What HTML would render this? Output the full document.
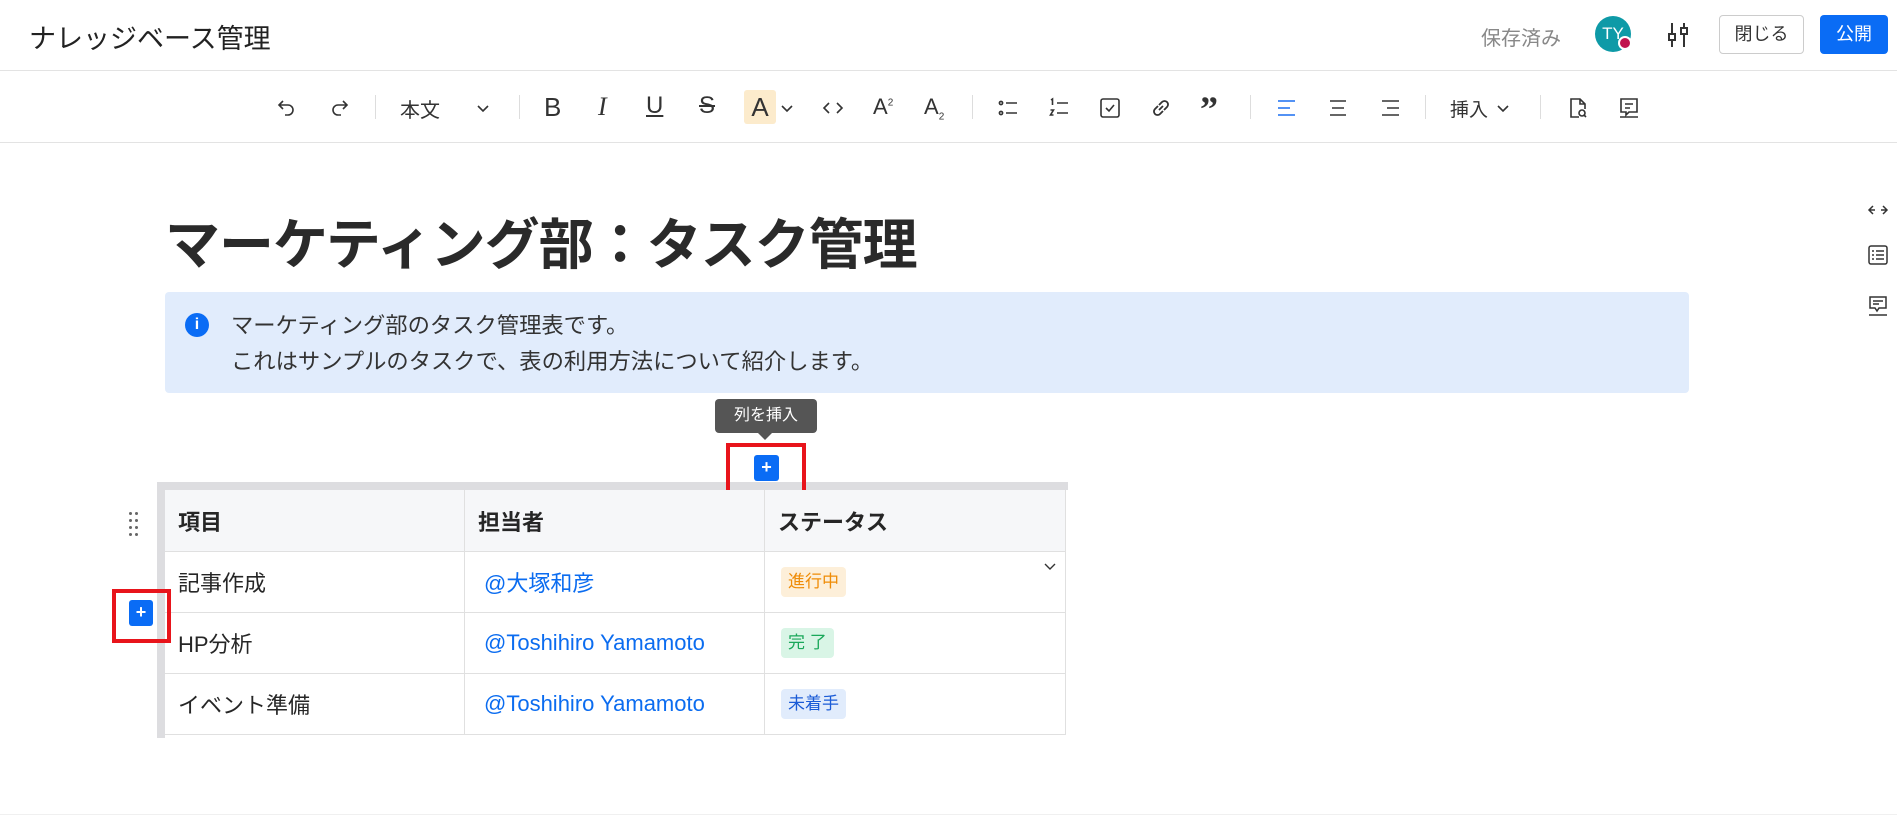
<!DOCTYPE html>
<html><head><meta charset="utf-8"><style>
*{margin:0;padding:0;box-sizing:border-box}
body{width:1897px;height:818px;overflow:hidden;background:#fff;font-family:"Liberation Sans","Noto Sans CJK JP",sans-serif;color:#262626;position:relative}
.a{position:absolute}
.hdr{left:0;top:0;width:1897px;height:71px;border-bottom:1px solid #e3e3e3}
.tb{left:0;top:71px;width:1897px;height:72px;border-bottom:1px solid #e3e3e3}
.ic{position:absolute;top:96px;width:24px;height:24px}
.sep{position:absolute;top:95px;width:1px;height:24px;background:#ddd}
svg{overflow:visible}
.cell{position:absolute;border-right:1px solid #e0e0e0;border-bottom:1px solid #e0e0e0;font-size:22px;display:flex;align-items:center;padding-left:13px}
.m{color:#0b6cf0;padding-left:19px}
.bd{display:inline-block;font-size:17px;height:30px;line-height:30px;padding:0 7px;border-radius:4px}
.dot{position:absolute;width:3px;height:3px;background:#666;border-radius:50%}
</style></head><body>
<div class="a hdr"></div>
<div class="a" style="left:29px;top:17px;font-size:27px;color:#222">ナレッジベース管理</div>
<div class="a" style="left:1481px;top:22px;font-size:20px;color:#888">保存済み</div>
<div class="a" style="left:1595px;top:16px;width:36px;height:36px;border-radius:50%;background:#0e9aa7;color:#fff;font-size:17px;text-align:center;line-height:36px">TY</div>
<div class="a" style="left:1618px;top:36px;width:14px;height:14px;border-radius:50%;background:#c0144f;border:2px solid #fff"></div>
<svg class="a" style="left:1666px;top:21px" width="24" height="28" viewBox="0 0 24 28" fill="none" stroke="#333" stroke-width="2"><line x1="6" y1="2" x2="6" y2="26"/><line x1="18" y1="2" x2="18" y2="26"/><rect x="3" y="13" width="6" height="6" fill="#fff"/><rect x="15" y="7" width="6" height="6" fill="#fff"/></svg>
<div class="a" style="left:1719px;top:15px;width:85px;height:39px;border:1px solid #ccc;border-radius:4px;font-size:18px;color:#333;text-align:center;line-height:37px">閉じる</div>
<div class="a" style="left:1820px;top:15px;width:68px;height:39px;background:#0a6cf5;border-radius:4px;font-size:18px;color:#fff;text-align:center;line-height:39px">公開</div>

<div class="a tb"></div>
<svg class="ic" style="left:275px" viewBox="0 0 24 24" fill="none" stroke="#333" stroke-width="1.6"><path d="M8 5L4 9l4 4M4 9h9a5 5 0 010 10h-3"/></svg>
<svg class="ic" style="left:327px" viewBox="0 0 24 24" fill="none" stroke="#333" stroke-width="1.6"><path d="M16 5l4 4-4 4M20 9h-9a5 5 0 000 10h3"/></svg>
<div class="sep" style="left:375px"></div>
<div class="a" style="left:400px;top:94px;font-size:20px;color:#333">本文</div>
<svg class="ic" style="left:471px" viewBox="0 0 24 24" fill="none" stroke="#333" stroke-width="1.6"><path d="M7 10l5 5 5-5"/></svg>
<div class="sep" style="left:519px"></div>
<div class="a" style="left:544px;top:92px;font-size:26px;color:#333;font-weight:300">B</div>
<div class="a" style="left:598px;top:92px;font-size:26px;color:#333;font-style:italic;font-family:'Liberation Serif',serif">I</div>
<div class="a" style="left:646px;top:92px;font-size:24px;color:#333;text-decoration:underline">U</div>
<div class="a" style="left:699px;top:92px;font-size:24px;color:#333;text-decoration:line-through">S</div>
<div class="a" style="left:744px;top:90px;width:32px;height:34px;background:#fcebcc;border-radius:3px;font-size:26px;color:#333;text-align:center;line-height:34px">A</div>
<svg class="ic" style="left:777px;width:20px" viewBox="0 0 20 24" fill="none" stroke="#333" stroke-width="1.6"><path d="M5 10l5 5 5-5"/></svg>
<svg class="ic" style="left:821px" viewBox="0 0 24 24" fill="none" stroke="#333" stroke-width="1.6"><path d="M8 7l-5 5 5 5M16 7l5 5-5 5"/></svg>
<div class="a" style="left:873px;top:94px;font-size:22px;color:#333">A<sup style="font-size:10px">2</sup></div>
<div class="a" style="left:924px;top:94px;font-size:22px;color:#333">A<sub style="font-size:10px">2</sub></div>
<div class="sep" style="left:972px"></div>
<svg class="ic" style="left:996px" viewBox="0 0 24 24" fill="none" stroke="#333" stroke-width="1.6"><circle cx="5" cy="7" r="1.6"/><circle cx="5" cy="17" r="1.6"/><path d="M10 7h11M10 17h11"/></svg>
<svg class="ic" style="left:1047px" viewBox="0 0 24 24" fill="none" stroke="#333" stroke-width="1.6"><path d="M4 4l1.5-1v6M3.5 14h3l-3 5h3M10 7h11M10 17h11"/></svg>
<svg class="ic" style="left:1098px" viewBox="0 0 24 24" fill="none" stroke="#333" stroke-width="1.6"><rect x="3" y="3" width="18" height="18" rx="2"/><path d="M8 12l3 3 5-6"/></svg>
<svg class="ic" style="left:1149px" viewBox="0 0 24 24" fill="none" stroke="#333" stroke-width="1.8"><path d="M10 14l4-4M9 10l-3 3a3.5 3.5 0 005 5l3-3M15 14l3-3a3.5 3.5 0 00-5-5l-3 3"/></svg>
<div class="a" style="left:1200px;top:88px;font-size:36px;font-weight:bold;color:#333;font-family:'Liberation Serif',serif">”</div>
<div class="sep" style="left:1250px"></div>
<svg class="ic" style="left:1275px" viewBox="0 0 24 24" fill="none" stroke="#1a6ff0" stroke-width="1.6"><path d="M3 5h17M3 12h12M3 19h17"/></svg>
<svg class="ic" style="left:1326px" viewBox="0 0 24 24" fill="none" stroke="#333" stroke-width="1.6"><path d="M4 5h16M6 12h12M4 19h16"/></svg>
<svg class="ic" style="left:1378px" viewBox="0 0 24 24" fill="none" stroke="#333" stroke-width="1.6"><path d="M4 5h17M9 12h12M4 19h17"/></svg>
<div class="sep" style="left:1425px"></div>
<div class="a" style="left:1450px;top:95px;font-size:19px;color:#333">挿入</div>
<svg class="ic" style="left:1494px;width:20px" viewBox="0 0 20 24" fill="none" stroke="#333" stroke-width="1.6"><path d="M4 10l5 5 5-5"/></svg>
<div class="sep" style="left:1540px"></div>
<svg class="ic" style="left:1566px" viewBox="0 0 24 24" fill="none" stroke="#333" stroke-width="1.6"><path d="M13 21H5V3h9l5 5v5M14 3v5h5"/><circle cx="16" cy="17" r="3"/><path d="M18 19l2 2"/></svg>
<svg class="ic" style="left:1617px" viewBox="0 0 24 24" fill="none" stroke="#333" stroke-width="1.6"><path d="M4 3h16v13h-8l-3 3v-3H4z M8 8h8M8 12h5M3 21h18"/></svg>

<svg class="a" style="left:1866px;top:200px" width="24" height="20" viewBox="0 0 24 20" fill="none" stroke="#333" stroke-width="1.5"><path d="M7 6l-4 4 4 4M17 6l4 4-4 4M3 10h6M15 10h6"/></svg>
<svg class="a" style="left:1867px;top:244px" width="22" height="22" viewBox="0 0 22 22" fill="none" stroke="#333" stroke-width="1.5"><rect x="2" y="2" width="18" height="18" rx="2"/><path d="M5 7h2M9 7h8M5 11h2M9 11h8M5 15h2M9 15h8"/></svg>
<svg class="a" style="left:1867px;top:295px" width="22" height="22" viewBox="0 0 22 22" fill="none" stroke="#333" stroke-width="1.5"><path d="M3 2h16v11h-7l-2 3-2-3H3z M6 6h10M6 9h6M2 20h18"/></svg>

<div class="a" style="left:165px;top:200px;font-size:55px;font-weight:bold;color:#2a2a2a;letter-spacing:-1px">マーケティング部：タスク管理</div>
<div class="a" style="left:165px;top:292px;width:1524px;height:101px;background:#e1ecfc;border-radius:4px"></div>
<div class="a" style="left:185px;top:313px;width:24px;height:24px;border-radius:50%;background:#0a6cf5;color:#fff;font-size:16px;text-align:center;line-height:24px;font-weight:bold">i</div>
<div class="a" style="left:231px;top:308px;font-size:22.3px;color:#333;line-height:36px">マーケティング部のタスク管理表です。<br>これはサンプルのタスクで、表の利用方法について紹介します。</div>

<div class="a" style="left:715px;top:399px;width:102px;height:34px;background:#555;border-radius:4px;color:#fff;font-size:16px;text-align:center;line-height:34px">列を挿入</div>
<div class="a" style="left:758px;top:433px;border-left:7px solid transparent;border-right:7px solid transparent;border-top:7px solid #555"></div>

<div class="a" style="left:157px;top:482px;width:911px;height:8px;background:#dddde0"></div>
<div class="a" style="left:157px;top:490px;width:8px;height:248px;background:#dddde0"></div>
<div class="dot" style="left:129px;top:512px"></div><div class="dot" style="left:135px;top:512px"></div>
<div class="dot" style="left:129px;top:519px"></div><div class="dot" style="left:135px;top:519px"></div>
<div class="dot" style="left:129px;top:526px"></div><div class="dot" style="left:135px;top:526px"></div>
<div class="dot" style="left:129px;top:533px"></div><div class="dot" style="left:135px;top:533px"></div>

<div class="a" style="left:726px;top:443px;width:80px;height:53px;border:4px solid #e8141b"></div>
<div class="a" style="left:754px;top:455px;width:25px;height:26px;background:#0a6cf5;border-radius:3px;color:#fff;font-size:18px;text-align:center;line-height:25px;font-weight:bold">+</div>

<div class="cell" style="left:165px;top:490px;width:300px;height:62px;background:#f6f7f9;font-weight:bold">項目</div>
<div class="cell" style="left:465px;top:490px;width:300px;height:62px;background:#f6f7f9;font-weight:bold">担当者</div>
<div class="cell" style="left:765px;top:490px;width:301px;height:62px;background:#f6f7f9;font-weight:bold">ステータス</div>
<div class="cell" style="left:165px;top:552px;width:300px;height:61px">記事作成</div>
<div class="cell m" style="left:465px;top:552px;width:300px;height:61px">@大塚和彦</div>
<div class="cell" style="left:765px;top:552px;width:301px;height:61px;padding-left:16px"><span class="bd" style="background:#fdefd9;color:#ef8c07">進行中</span></div>
<svg class="a" style="left:1043px;top:562px" width="14" height="10" viewBox="0 0 14 10" fill="none" stroke="#333" stroke-width="1.4"><path d="M2 2l5 5 5-5"/></svg>
<div class="cell" style="left:165px;top:613px;width:300px;height:61px">HP分析</div>
<div class="cell m" style="left:465px;top:613px;width:300px;height:61px">@Toshihiro Yamamoto</div>
<div class="cell" style="left:765px;top:613px;width:301px;height:61px;padding-left:16px"><span class="bd" style="background:#d9f5e6;color:#1aa85a">完 了</span></div>
<div class="cell" style="left:165px;top:674px;width:300px;height:61px">イベント準備</div>
<div class="cell m" style="left:465px;top:674px;width:300px;height:61px">@Toshihiro Yamamoto</div>
<div class="cell" style="left:765px;top:674px;width:301px;height:61px;padding-left:16px"><span class="bd" style="background:#e1ecfc;color:#1a5bd6">未着手</span></div>

<div class="a" style="left:112px;top:589px;width:59px;height:54px;border:4px solid #e8141b"></div>
<div class="a" style="left:129px;top:600px;width:24px;height:26px;background:#0a6cf5;border-radius:3px;color:#fff;font-size:18px;text-align:center;line-height:25px;font-weight:bold">+</div>
<div class="a" style="left:0;top:814px;width:1897px;height:1px;background:#f0f0f0"></div>
</body></html>
